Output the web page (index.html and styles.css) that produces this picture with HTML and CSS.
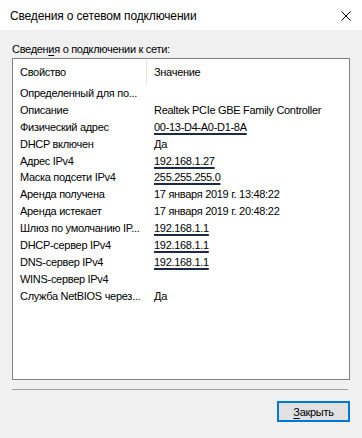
FILE: index.html
```html
<!DOCTYPE html>
<html lang="ru">
<head>
<meta charset="utf-8">
<link rel="stylesheet" href="styles.css">
</head>
<body>
<div class="window">
  <div class="titlebar">
    <span class="title">Сведения о сетевом подключении</span>
    <svg class="close" width="10" height="10" viewBox="0 0 10 10"><path d="M0.5 0.5 L9.5 9.5 M9.5 0.5 L0.5 9.5" stroke="#000" stroke-width="1" fill="none"/></svg>
  </div>
  <div class="body">
    <div class="group-label">Сведен<u>и</u>я о подключении к сети:</div>
    <div class="listbox">
      <div class="list-head">
        <div class="hcell hcol1">Свойство</div>
        <div class="hcell">Значение</div>
      </div>
      <div class="rows">
        <div class="c1">Определенный для по...</div><div class="c2"></div>
        <div class="c1">Описание</div><div class="c2">Realtek PCIe GBE Family Controller</div>
        <div class="c1">Физический адрес</div><div class="c2"><span class="mark">00-13-D4-A0-D1-8A</span></div>
        <div class="c1">DHCP включен</div><div class="c2">Да</div>
        <div class="c1">Адрес IPv4</div><div class="c2"><span class="mark">192.168.1.27</span></div>
        <div class="c1">Маска подсети IPv4</div><div class="c2"><span class="mark">255.255.255.0</span></div>
        <div class="c1">Аренда получена</div><div class="c2">17 января 2019 г. 13:48:22</div>
        <div class="c1">Аренда истекает</div><div class="c2">17 января 2019 г. 20:48:22</div>
        <div class="c1">Шлюз по умолчанию IP...</div><div class="c2"><span class="mark">192.168.1.1</span></div>
        <div class="c1">DHCP-сервер IPv4</div><div class="c2"><span class="mark">192.168.1.1</span></div>
        <div class="c1">DNS-сервер IPv4</div><div class="c2"><span class="mark">192.168.1.1</span></div>
        <div class="c1">WINS-сервер IPv4</div><div class="c2"></div>
        <div class="c1">Служба NetBIOS через...</div><div class="c2">Да</div>
      </div>
    </div>
    <div class="separator"></div>
    <div class="actions">
      <button class="btn"><u>З</u>акрыть</button>
    </div>
  </div>
</div>
</body>
</html>
```
FILE: styles.css
```css
html, body {
  margin: 0;
  padding: 0;
}
body {
  width: 362px;
  height: 438px;
  background: #f0f0f0;
  font-family: "Liberation Sans", Arial, sans-serif;
  color: #000;
  overflow: hidden;
}
.window {
  display: flex;
  flex-direction: column;
  height: 438px;
}
.titlebar {
  height: 30px;
  background: #fff;
  display: flex;
  align-items: center;
  justify-content: space-between;
  padding: 1px 11px 0 10px;
  box-sizing: border-box;
}
.title {
  font-size: 12px;
  letter-spacing: -0.15px;
}
.close {
  display: block;
  margin-top: 0;
}
.body {
  padding: 0 12px;
  font-size: 11px;
  letter-spacing: -0.3px;
}
.group-label {
  height: 17px;
  line-height: 17px;
  margin-top: 11px;
  padding-left: 0;
}
.group-label u {
  text-underline-offset: 2px;
}
.listbox {
  margin-top: 0;
  height: 322px;
  box-sizing: border-box;
  border: 1px solid #828282;
  background: #fff;
}
.list-head {
  display: grid;
  grid-template-columns: 134px 1fr;
  height: 26px;
}
.hcell {
  line-height: 26px;
  padding-left: 7px;
}
.hcol1 {
  border-right: 1px solid #e5e5e5;
}
.rows {
  display: grid;
  grid-template-columns: 134px 1fr;
  grid-auto-rows: 16.9px;
}
.c1 {
  padding-left: 7px;
  line-height: 17px;
  white-space: nowrap;
}
.c2 {
  padding-left: 7px;
  line-height: 17px;
  white-space: nowrap;
}
.mark {
  text-decoration: underline;
  text-decoration-color: #1b2a45;
  text-decoration-thickness: 2px;
  text-underline-offset: 2px;
  text-decoration-skip-ink: none;
}
.separator {
  margin-top: 9px;
  margin-right: 2px;
  border-top: 1px solid #a0a0a0;
}
.actions {
  display: flex;
  justify-content: flex-end;
  margin-top: 11px;
}
.btn {
  width: 73px;
  height: 21px;
  box-sizing: border-box;
  border: 2px solid #0078d7;
  background: #e1e1e1;
  font-family: "Liberation Sans", Arial, sans-serif;
  font-size: 11px;
  letter-spacing: -0.3px;
  color: #000;
  padding: 0;
  margin-right: 0;
}
.btn u {
  text-underline-offset: 2px;
}
```
